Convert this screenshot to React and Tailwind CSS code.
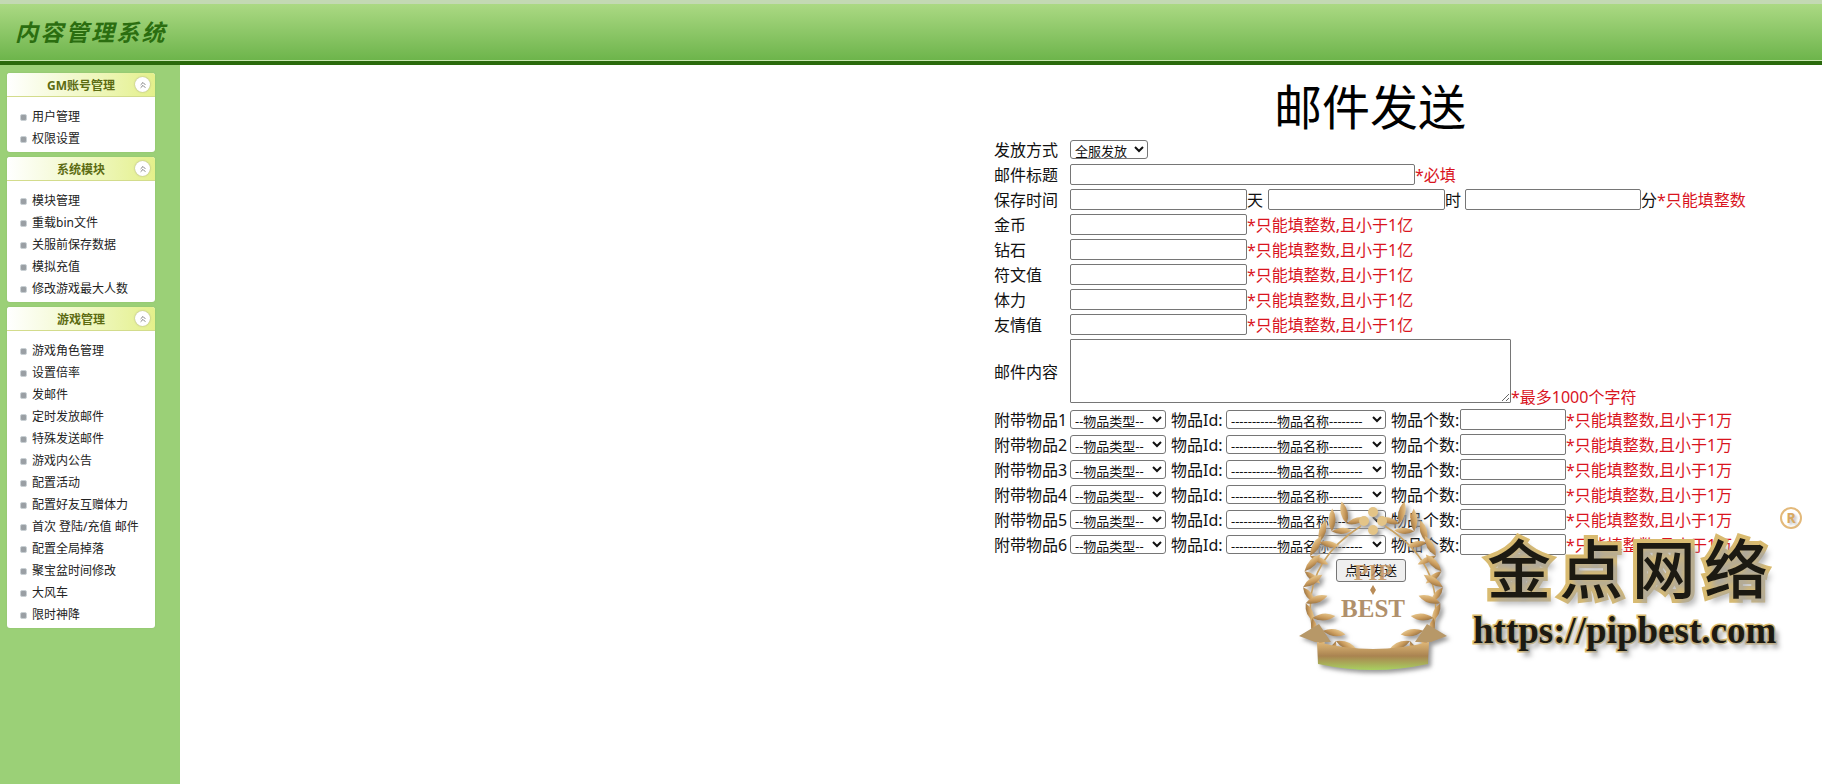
import React from 'react';
import { ChevronsUp } from 'lucide-react';

const menus = [
  { title: 'GM账号管理', items: ['用户管理', '权限设置'] },
  { title: '系统模块', items: ['模块管理', '重载bin文件', '关服前保存数据', '模拟充值', '修改游戏最大人数'] },
  {
    title: '游戏管理',
    items: ['游戏角色管理', '设置倍率', '发邮件', '定时发放邮件', '特殊发送邮件', '游戏内公告', '配置活动', '配置好友互赠体力', '首次 登陆/充值 邮件', '配置全局掉落', '聚宝盆时间修改', '大风车', '限时神降'],
  },
];

const inputCls = 'h-[21px] border border-[#767676] rounded-[2px] bg-white outline-none';
const selectCls = 'h-[19px] border border-[#767676] rounded-[3px] bg-white text-[13px] leading-none';
const hintCls = 'text-[#d9141e] whitespace-nowrap';

const Row = ({ label, children }) => (
  <div className="flex items-center h-[25px] whitespace-nowrap">
    <span className="w-[76px] shrink-0">{label}</span>
    {children}
  </div>
);

const MenuPanel = ({ title, items }) => (
  <div className="w-[148px] bg-white rounded-[3px] shadow-[0_0_2px_#8fbd70]">
    <div className="relative h-[24px] flex items-center justify-center pt-[2px] rounded-t-[3px] bg-gradient-to-r from-white to-[#e4f08a] border-b border-[#d3dc8c] text-[12px] font-bold text-[#5c6b12]">
      <span>{title}</span>
      <span className="absolute left-[128px] top-[4px] w-[15px] h-[15px] rounded-full bg-white flex items-center justify-center shadow-[0_0_2px_#a0a080]">
        <ChevronsUp className="w-[10px] h-[10px] text-[#666]" strokeWidth={2} />
      </span>
    </div>
    <ul className="pt-[9px] pb-[2px]">
      {items.map((item) => (
        <li key={item} className="h-[22px] flex items-center pl-[13px] text-[12px] text-[#222] whitespace-nowrap">
          <span className="w-[7px] h-[7px] mr-[5px] rounded-[2px] bg-[#9a9fa4] border border-[#c9d0d4]" />
          {item}
        </li>
      ))}
    </ul>
  </div>
);

// laurel leaves placed along the wreath arc
const leafAngles = [112, 126, 140, 154, 168, 182, 196, 210, 224, 238];

const Wreath = () => (
  <svg width="170" height="180" viewBox="0 0 170 180" className="absolute left-[1293px] top-[500px]">
    <defs>
      <linearGradient id="leaf" x1="0" y1="0" x2="1" y2="1">
        <stop offset="0" stopColor="#f3d9a0" />
        <stop offset="0.55" stopColor="#c99a5c" />
        <stop offset="1" stopColor="#7d5f36" />
      </linearGradient>
      <linearGradient id="ribbon" x1="0" y1="0" x2="0" y2="1">
        <stop offset="0" stopColor="#e0b878" />
        <stop offset="0.5" stopColor="#a98350" />
        <stop offset="1" stopColor="#a8d060" />
      </linearGradient>
      <filter id="soft" x="-10%" y="-10%" width="125%" height="125%">
        <feDropShadow dx="3" dy="3" stdDeviation="2" floodColor="#999" />
      </filter>
    </defs>
    <g filter="url(#soft)">
      {[1, -1].map((side) => (
        <g key={side} transform={side === -1 ? 'translate(160 0) scale(-1 1)' : undefined}>
          <path d="M68 26 Q2 68 22 138" fill="none" stroke="#c9a262" strokeWidth="1.5" />
          {leafAngles.map((a) => {
            const r = (a * Math.PI) / 180;
            const x = 80 + 70 * Math.cos(r);
            const y = 85 - 66 * Math.sin(r);
            return (
              <g key={a}>
                <path d="M0 0 Q7 -12 0 -23 Q-7 -12 0 0Z" fill="url(#leaf)" transform={`translate(${x} ${y}) rotate(${a - 125})`} />
                <path d="M0 0 Q6 -10 0 -20 Q-6 -10 0 0Z" fill="url(#leaf)" transform={`translate(${x} ${y}) rotate(${a - 40})`} />
              </g>
            );
          })}
        </g>
      ))}
      <g fill="#e3c487">
        <circle cx="80" cy="12" r="5" />
        <circle cx="71" cy="21" r="5" />
        <circle cx="89" cy="21" r="5" />
        <circle cx="80" cy="30" r="5" />
      </g>
      <path d="M22 142 L6 136 L26 124 L38 142 Z M138 142 L154 136 L134 124 L122 142 Z" fill="#b79868" />
      <path d="M24 142 Q80 156 136 142 L135 164 Q80 176 25 164 Z" fill="url(#ribbon)" />
    </g>
    <text x="80" y="80" textAnchor="middle" fontFamily="'Liberation Serif', serif" fontWeight="700" fontSize="24" fill="#c39562" fillOpacity="0.9">PIP</text>
    <path d="M80 85 L83 90 L80 95 L77 90 Z" fill="#b98c58" />
    <text x="80" y="117" textAnchor="middle" fontFamily="'Liberation Serif', serif" fontWeight="700" fontSize="25" fill="#b0906c">BEST</text>
  </svg>
);

export default function App() {
  return (
    <div className="relative w-[1822px] h-[784px] overflow-hidden bg-white text-[16px] leading-none text-[#111] font-['Noto_Sans','Noto_Sans_CJK_SC',sans-serif]">
      <header className="h-[65px] border-t-[4px] border-b-[4px] border-t-[#c3d9b3] border-b-[#2a6a0c] bg-gradient-to-b from-[#abd983] to-[#6cb44a]">
        <div className="h-[57px] border-b border-[#c8e6b0] flex items-center pl-[15px]">
          <h1 className="text-[23px] font-bold italic tracking-[2.3px] text-[#2b6e10]">内容管理系统</h1>
        </div>
      </header>

      <div className="flex h-[719px]">
        <aside className="w-[180px] shrink-0 bg-[#9bd077] pl-[7px] pt-[8px] flex flex-col gap-[5px]">
          {menus.map((m) => (
            <MenuPanel key={m.title} title={m.title} items={m.items} />
          ))}
        </aside>

        <main className="flex-1 pl-[814px]">
          <div className="w-[754px]">
            <h2 className="h-[72px] pt-[12px] pr-[2px] flex items-center justify-center text-[48px] font-normal text-black">邮件发送</h2>
            <Row label="发放方式">
              <select className={`${selectCls} w-[78px]`}>
                <option>全服发放</option>
              </select>
            </Row>
            <Row label="邮件标题">
              <input className={`${inputCls} w-[345px]`} />
              <span className={hintCls}>*必填</span>
            </Row>
            <Row label="保存时间">
              <input className={`${inputCls} w-[177px]`} />
              <span className="w-[21px]">天</span>
              <input className={`${inputCls} w-[177px]`} />
              <span className="w-[20px]">时</span>
              <input className={`${inputCls} w-[176px]`} />
              <span>分</span>
              <span className={hintCls}>*只能填整数</span>
            </Row>
            {['金币', '钻石', '符文值', '体力', '友情值'].map((label) => (
              <Row key={label} label={label}>
                <input className={`${inputCls} w-[177px]`} />
                <span className={hintCls}>*只能填整数,且小于1亿</span>
              </Row>
            ))}
            <div className="flex items-center h-[70px] whitespace-nowrap">
              <span className="w-[76px] shrink-0">邮件内容</span>
              <div className="flex items-end pb-[3px] pt-[1px]">
                <textarea className="block w-[441px] h-[64px] border border-[#767676] rounded-[1px] bg-white outline-none" />
                <span className={`${hintCls} -mb-[2px]`}>*最多1000个字符</span>
              </div>
            </div>
            {[1, 2, 3, 4, 5, 6].map((n) => (
              <Row key={n} label={`附带物品${n}`}>
                <select className={`${selectCls} w-[96px]`}>
                  <option>--物品类型--</option>
                </select>
                <span className="ml-[5px] w-[55px]">物品Id:</span>
                <select className={`${selectCls} w-[160px]`}>
                  <option>-----------物品名称--------</option>
                </select>
                <span className="ml-[5px] w-[69px]">物品个数:</span>
                <input className={`${inputCls} w-[106px]`} />
                <span className={hintCls}>*只能填整数,且小于1万</span>
              </Row>
            ))}
            <div className="flex justify-center pt-[2px]">
              <button className="w-[70px] h-[23px] border border-[#767676] rounded-[3px] bg-[#efefef] text-[13px] text-[#111]">点击发送</button>
            </div>
          </div>
        </main>
      </div>

      {/* watermark over the form */}
      <Wreath />
      <div className="absolute left-[1487px] top-[530px] w-[281px] flex justify-between text-[64px] leading-[78px] font-medium text-[#1c1a12] [-webkit-text-stroke:8px_#d9bb70] [paint-order:stroke_fill] [text-shadow:5px_6px_6px_#a5a5a5]">
        <span>金</span>
        <span>点</span>
        <span>网</span>
        <span>络</span>
      </div>
      <div className="absolute left-[1473px] top-[608px] text-[37px] leading-[46px] font-bold whitespace-nowrap text-[#1c1a12] font-['Liberation_Serif',serif] [-webkit-text-stroke:3px_#d9bb70] [paint-order:stroke_fill] [text-shadow:4px_5px_5px_#a5a5a5]">https://pipbest.com</div>
      <div className="absolute left-[1780px] top-[507px] w-[22px] h-[22px] rounded-full border-[2px] border-[#e3b97a] flex items-center justify-center text-[14px] font-bold text-[#d9a860] [text-shadow:2px_2px_3px_#bbb]">R</div>
    </div>
  );
}
